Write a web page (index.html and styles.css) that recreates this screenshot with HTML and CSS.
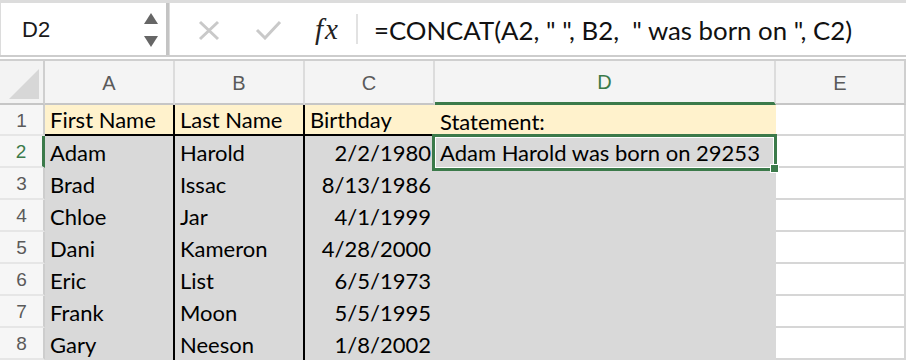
FILE: index.html
```html
<!DOCTYPE html>
<html lang="en">
<head>
    <meta charset="UTF-8">
    <title>Sheet - CONCAT</title>
    <link rel="stylesheet" href="styles.css">
</head>
<body>
    <!-- Name box + formula bar -->
    <header class="toolbar">
        <div class="namebox">
            <span class="ref">D2</span>
            <span class="spin">
                <svg width="14" height="34" viewBox="0 0 14 34">
                    <polygon points="7,0 14,11 0,11" fill="#666"/>
                    <polygon points="0,23 14,23 7,34" fill="#666"/>
                </svg>
            </span>
        </div>
        <div class="formula-bar">
            <svg class="fb-icon x-icon" width="22" height="21" viewBox="0 0 22 21">
                <path d="M2 2 L20 19 M20 2 L2 19" stroke="#c9c9c9" stroke-width="3" fill="none"/>
            </svg>
            <svg class="fb-icon ok-icon" width="27" height="20" viewBox="0 0 27 20">
                <path d="M2 10 L10 18 L25 2" stroke="#c9c9c9" stroke-width="3" fill="none"/>
            </svg>
            <span class="fx">fx</span>
            <span class="fb-sep"></span>
            <span class="formula">=CONCAT(A2, " ", B2,  " was born on ", C2)</span>
        </div>
    </header>

    <!-- Grid -->
    <main class="sheet">
        <div class="corner"><span class="tri"></span></div>
        <div class="ch">A</div>
        <div class="ch">B</div>
        <div class="ch">C</div>
        <div class="ch ch-active">D</div>
        <div class="ch ch-last">E</div>

        <div class="rh">1</div>
        <div class="cell hd bk">First Name</div>
        <div class="cell hd bk">Last Name</div>
        <div class="cell hd hd-c">Birthday</div>
        <div class="cell hd hd-d">Statement:</div>
        <div class="cell e"></div>

        <div class="rh rh-active">2</div>
        <div class="cell dt bk">Adam</div>
        <div class="cell dt bk">Harold</div>
        <div class="cell dt r">2/2/1980</div>
        <div class="cell dt sel">Adam Harold was born on 29253<span class="sel-box"><span class="handle"></span></span></div>
        <div class="cell e"></div>

        <div class="rh">3</div>
        <div class="cell dt bk">Brad</div>
        <div class="cell dt bk">Issac</div>
        <div class="cell dt r">8/13/1986</div>
        <div class="cell dt"></div>
        <div class="cell e"></div>

        <div class="rh">4</div>
        <div class="cell dt bk">Chloe</div>
        <div class="cell dt bk">Jar</div>
        <div class="cell dt r">4/1/1999</div>
        <div class="cell dt"></div>
        <div class="cell e"></div>

        <div class="rh">5</div>
        <div class="cell dt bk">Dani</div>
        <div class="cell dt bk">Kameron</div>
        <div class="cell dt r">4/28/2000</div>
        <div class="cell dt"></div>
        <div class="cell e"></div>

        <div class="rh">6</div>
        <div class="cell dt bk">Eric</div>
        <div class="cell dt bk">List</div>
        <div class="cell dt r">6/5/1973</div>
        <div class="cell dt"></div>
        <div class="cell e"></div>

        <div class="rh">7</div>
        <div class="cell dt bk">Frank</div>
        <div class="cell dt bk">Moon</div>
        <div class="cell dt r">5/5/1995</div>
        <div class="cell dt"></div>
        <div class="cell e"></div>

        <div class="rh">8</div>
        <div class="cell dt bk">Gary</div>
        <div class="cell dt bk">Neeson</div>
        <div class="cell dt r">1/8/2002</div>
        <div class="cell dt"></div>
        <div class="cell e"></div>
    </main>
</body>
</html>
```

FILE: styles.css
```css
/* General */
body {
    margin: 0;
    width: 906px;
    height: 362px;
    overflow: hidden;
    background: #ffffff;
    font-family: 'Liberation Sans', Arial, sans-serif;
}

/* Toolbar: name box + formula bar */
.toolbar {
    display: flex;
    height: 52px;
    padding-top: 3px;
    background: #dcdcdc;
    border-bottom: 2px solid #cdcdcd;
}

.namebox {
    display: flex;
    align-items: center;
    box-sizing: border-box;
    width: 168px;
    margin-left: 1px;
    padding: 0 8px 0 21px;
    background: #fff;
    border-right: 3px solid #c4c4c4;
}

.ref {
    flex: 1;
    font-size: 22px;
    color: #1a1a1a;
    padding-top: 2px;
}

.spin svg {
    display: block;
    margin-top: 2px;
}

.formula-bar {
    display: flex;
    align-items: center;
    flex: 1;
    margin-left: 1px;
    background: #fff;
}

.x-icon {
    margin-left: 28px;
    margin-top: 2px;
}

.ok-icon {
    margin-left: 35px;
    margin-top: 1px;
}

.fx {
    margin-left: 33px;
    font-family: 'Liberation Serif', 'Times New Roman', serif;
    font-style: italic;
    font-size: 29px;
    color: #222;
    letter-spacing: 2px;
}

.fb-sep {
    width: 2px;
    height: 30px;
    margin-left: 16px;
    background: #e2e2e2;
}

.formula {
    margin-left: 16px;
    padding-top: 1px;
    font-family: Lato, 'Open Sans', sans-serif;
    font-size: 25.8px;
    color: #111;
    white-space: pre;
}

/* Sheet grid */
.sheet {
    display: grid;
    grid-template-columns: 45px 130px 130px 130px 341px 130px;
    grid-template-rows: 44px 31px repeat(7, 32px) 2px;
    margin-top: 2px;
    border-top: 2px solid #cfcfcf;
    font-family: Lato, 'Open Sans', sans-serif;
    font-size: 22px;
    color: #000;
}

.corner {
    position: relative;
    background: #f3f3f3;
    border-right: 2px solid #cfcfcf;
    border-bottom: 2px solid #c6c6c6;
}

.tri {
    position: absolute;
    right: 4px;
    bottom: 4px;
    width: 30px;
    height: 30px;
    background: #d7d7d7;
    clip-path: polygon(100% 0, 100% 100%, 0 100%);
}

.ch {
    display: flex;
    align-items: center;
    justify-content: center;
    padding-top: 2px;
    background: #f4f4f4;
    border-right: 2px solid #dcdcdc;
    border-bottom: 2px solid #c6c6c6;
    font-family: 'Liberation Sans', Arial, sans-serif;
    font-size: 20px;
    color: #5a5a5a;
}

.ch-active {
    color: #3b7a4a;
    border-bottom: 3px solid #3b7a4a;
}

.ch-last {
    border-right: 2px solid #cfcfcf;
}

.rh {
    display: flex;
    align-items: center;
    justify-content: center;
    background: #f6f6f6;
    border-right: 2px solid #cdcdcd;
    border-bottom: 2px solid #e6e6e6;
    font-family: 'Liberation Sans', Arial, sans-serif;
    font-size: 19px;
    color: #5a5a5a;
    padding-top: 2px;
}

.rh-active {
    color: #3b7a4a;
    border-right: 3px solid #3b7a4a;
}

/* Cells */
.cell {
    display: flex;
    align-items: flex-end;
    box-sizing: border-box;
    padding: 0 4px 2px 5px;
    white-space: nowrap;
    line-height: 26px;
}

.hd {
    background: #fff2cc;
}

.hd.bk,
.hd-c {
    border-bottom: 2px solid #000;
    padding-bottom: 1px;
}

.hd-d {
    padding-bottom: 1px;
}

.dt {
    background: #d9d9d9;
}

.bk {
    border-right: 2px solid #000;
}

.r {
    justify-content: flex-end;
}

.e {
    background: #fff;
    border-right: 2px solid #d6d6d6;
    border-bottom: 2px solid #d6d6d6;
}

/* Active cell selection */
.sel {
    position: relative;
}

.sel-box {
    position: absolute;
    top: -2px;
    left: -3px;
    right: -1px;
    bottom: -3px;
    border: 3px solid #3b7a4a;
    box-shadow: inset 0 0 0 1px #fff;
}

.handle {
    position: absolute;
    right: -5px;
    bottom: -5px;
    width: 7px;
    height: 7px;
    background: #3b7a4a;
    border: 1px solid #fff;
}
```
